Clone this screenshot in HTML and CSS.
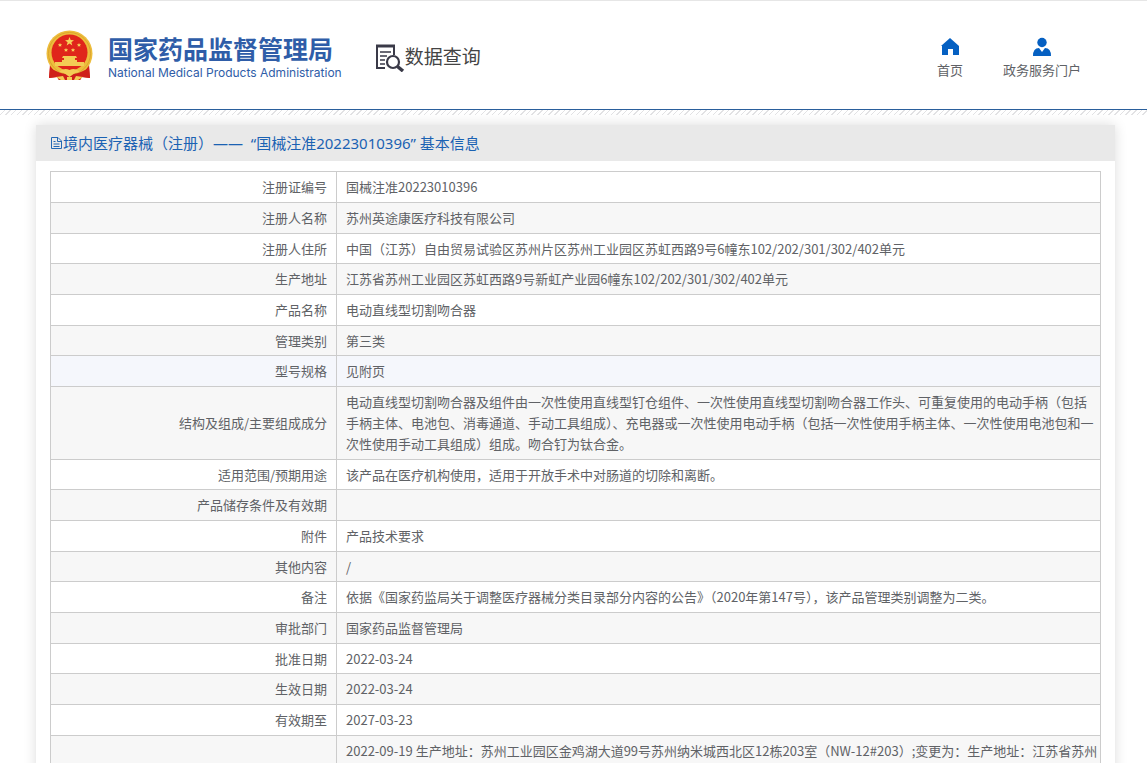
FILE: index.html
```html
<!DOCTYPE html>
<html lang="zh-CN">
<head>
    <meta charset="UTF-8">
    <title>数据查询 - 国家药品监督管理局</title>
    <link rel="stylesheet" href="styles.css">
</head>
<body>
<header class="header">
    <a class="logo" href="#">
        <svg class="emblem" viewBox="0 0 48 52" aria-hidden="true">
            <path d="M4 34 L3 48 L11 47 L13 50 L34 50 L36 47 L44 48 L43 34 Z" fill="#d0201a"/>
            <circle cx="23.500" cy="23.500" r="23" fill="#edbd3c"/>
            <circle cx="23.500" cy="23.500" r="21" fill="none" stroke="#dba52e" stroke-width="1"/>
            <circle cx="23.500" cy="22.500" r="18" fill="#e0251b"/>
            <path d="M23.500 7 l1.200 3.100 3.300.1 -2.600 2 .9 3.200 -2.800-1.800 -2.800 1.800 .9-3.200 -2.600-2 3.300-.1z" fill="#f6d25a"/>
            <g fill="#f6d25a">
                <path id="star" d="M14 13 l.6 1.300 1.500.1 -1.100 1 .3 1.400 -1.300-.7 -1.300.7 .3-1.400 -1.100-1 1.500-.1z"/>
                <use href="#star" x="19"/>
                <use href="#star" x="6" y="5"/>
                <use href="#star" x="13" y="5"/>
            </g>
            <path d="M17 26h13l1 2h-15z M18 28h11v3h-11z M16 30h15v2h-15z M9 32h29v4h-29z" fill="#f3cc55"/>
            <path d="M4 38 q9 5 15 6 l4.500-1 4.500 1 q6-1 15-6 l1 10 -8-1 -2 3 -21 0 -2-3 -8 1z" fill="#cf1f1a"/>
            <path d="M13 42 q5-5 10.500-2 q5.500-3 10.500 2 l-5 1 -5.500 4 -5.500-4z" fill="#f3cc55"/>
            <path d="M10 47l7-1 2 4h-4z M37 47l-7-1-2 4h4z M21 47h5v3h-5z" fill="#f3cc55"/>
        </svg>
        <span class="logo-text">
            <span class="logo-cn">国家药品监督管理局</span>
            <span class="logo-en">National Medical Products Administration</span>
        </span>
    </a>
    <h1 class="site-name">
        <svg class="site-icon" viewBox="0 0 30 28" aria-hidden="true">
            <g fill="none" stroke="#3a3a48">
                <path d="M10 24H2V2h17v9" stroke-width="2"/>
                <path d="M1 2h19" stroke-width="3"/>
                <path d="M5 8h11M5 12h7M5 16h5M5 20h5" stroke-width="1.500"/>
                <circle cx="18" cy="18" r="6" stroke-width="2.200"/>
                <path d="M22.500 22.500l5.500 4.500" stroke-width="3.500"/>
            </g>
        </svg>
        数据查询
    </h1>
    <nav class="nav">
        <a href="#">
            <svg viewBox="0 0 20 20" aria-hidden="true"><path d="M10 1 L19 9 V18 H13 V12 H8 V18 H2 V9 H1 Z" fill="#0560c2"/></svg>
            首页
        </a>
        <a href="#">
            <svg viewBox="0 0 20 20" aria-hidden="true"><circle cx="10" cy="5.500" r="4.700" fill="#0560c2"/><path d="M1 19 Q1 11 7 11 L10 15 L13 11 Q19 11 19 19 Z" fill="#0560c2"/></svg>
            政务服务门户
        </a>
    </nav>
</header>
<div class="stripe"></div>

<main class="panel">
    <h2 class="panel-title">
        <svg viewBox="0 0 13 14" aria-hidden="true"><path d="M1.500 1.500h6.500l3.500 3.500v7.500h-10z M7.500 1.500v4h4 M3.500 5.500h2 M3.500 8h6 M3.500 10.500h6" fill="none" stroke="#2468b4"/></svg>
        境内医疗器械（注册）——&nbsp; “国械注准20223010396” 基本信息
    </h2>
    <div class="panel-body">
        <table class="info">
            <tr><th scope="row">注册证编号</th><td>国械注准20223010396</td></tr>
            <tr><th scope="row">注册人名称</th><td>苏州英途康医疗科技有限公司</td></tr>
            <tr><th scope="row">注册人住所</th><td>中国（江苏）自由贸易试验区苏州片区苏州工业园区苏虹西路9号6幢东102/202/301/302/402单元</td></tr>
            <tr><th scope="row">生产地址</th><td>江苏省苏州工业园区苏虹西路9号新虹产业园6幢东102/202/301/302/402单元</td></tr>
            <tr><th scope="row">产品名称</th><td>电动直线型切割吻合器</td></tr>
            <tr><th scope="row">管理类别</th><td>第三类</td></tr>
            <tr class="active"><th scope="row">型号规格</th><td>见附页</td></tr>
            <tr><th scope="row">结构及组成/主要组成成分</th><td>电动直线型切割吻合器及组件由一次性使用直线型钉仓组件、一次性使用直线型切割吻合器工作头、可重复使用的电动手柄（包括手柄主体、电池包、消毒通道、手动工具组成）、充电器或一次性使用电动手柄（包括一次性使用手柄主体、一次性使用电池包和一次性使用手动工具组成）组成。吻合钉为钛合金。</td></tr>
            <tr><th scope="row">适用范围/预期用途</th><td>该产品在医疗机构使用，适用于开放手术中对肠道的切除和离断。</td></tr>
            <tr><th scope="row">产品储存条件及有效期</th><td></td></tr>
            <tr><th scope="row">附件</th><td>产品技术要求</td></tr>
            <tr><th scope="row">其他内容</th><td>/</td></tr>
            <tr><th scope="row">备注</th><td>依据《国家药监局关于调整医疗器械分类目录部分内容的公告》（2020年第147号），该产品管理类别调整为二类。</td></tr>
            <tr><th scope="row">审批部门</th><td>国家药品监督管理局</td></tr>
            <tr><th scope="row">批准日期</th><td>2022-03-24</td></tr>
            <tr><th scope="row">生效日期</th><td>2022-03-24</td></tr>
            <tr><th scope="row">有效期至</th><td>2027-03-23</td></tr>
            <tr><th scope="row"></th><td>2022-09-19 生产地址：苏州工业园区金鸡湖大道99号苏州纳米城西北区12栋203室（NW-12#203）;变更为：生产地址：江苏省苏州</td></tr>
        </table>
    </div>
</main>
</body>
</html>
```
FILE: styles.css
```css
* { box-sizing: border-box; }
html { overflow-x: hidden; scrollbar-width: none; }
body { margin: 0; background: #fff; color: #606266; font: 13px/21px "Noto Sans CJK SC", sans-serif; }
a { color: inherit; text-decoration: none; }

/* header */
.header { display: flex; align-items: center; height: 110px; padding: 2px 66px 0 46px; border-top: 1px solid #e6e6e6; border-bottom: 1px solid #2a5f9c; }
.logo { display: flex; align-items: center; gap: 14px; color: #2f5da8; }
.emblem { width: 48px; height: 52px; }
.logo-text { display: flex; flex-direction: column; padding-top: 4px; white-space: nowrap; }
.logo-cn { font-size: 25px; line-height: 30px; font-weight: 700; }
.logo-en { font-family: Inter, sans-serif; font-size: 12px; line-height: 20px; }
.site-name { display: flex; align-items: center; margin: 0 0 0 33px; color: #444; font-size: 19px; line-height: 28px; font-weight: 400; }
.site-icon { width: 30px; height: 28px; margin-top: 4px; }
.nav { display: flex; gap: 40px; margin-left: auto; padding-top: 4px; }
.nav a { display: flex; flex-direction: column; align-items: center; gap: 2px; }
.nav svg { width: 20px; height: 20px; }
.stripe { height: 5px; background: repeating-linear-gradient(135deg, #fff 0 3px, #e2e2e4 3px 4px); }

/* detail panel */
.panel { margin: 10px 32px 0 36px; background: #fff; box-shadow: 0 0 12px rgba(0, 0, 0, .14); }
.panel-title { display: flex; align-items: center; height: 36px; margin: 0; padding: 0 14px; background: #e9e9e9; color: #1b62b3; font-family: "Noto Sans", "Noto Sans CJK SC", sans-serif; font-size: 15px; font-weight: 400; }
.panel-title svg { width: 13px; height: 14px; }
.panel-body { padding: 10px 14px; }

.info { width: 100%; border-collapse: collapse; table-layout: fixed; border: 1px solid #ccc; }
.info th, .info td { padding: 4px 9px 5px; border: 1px solid #ccc; text-align: left; height: 31px; }
.info td { padding-right: 2px; }
.info th { width: 286px; font-weight: 400; text-align: right; }
.info tr:nth-child(even) { background: #f7f7f7; }
.info tr:nth-child(3n) th, .info tr:nth-child(3n) td { padding-bottom: 4px; height: 30px; }
.info tr.active { background: #f5f7fc; }
```
